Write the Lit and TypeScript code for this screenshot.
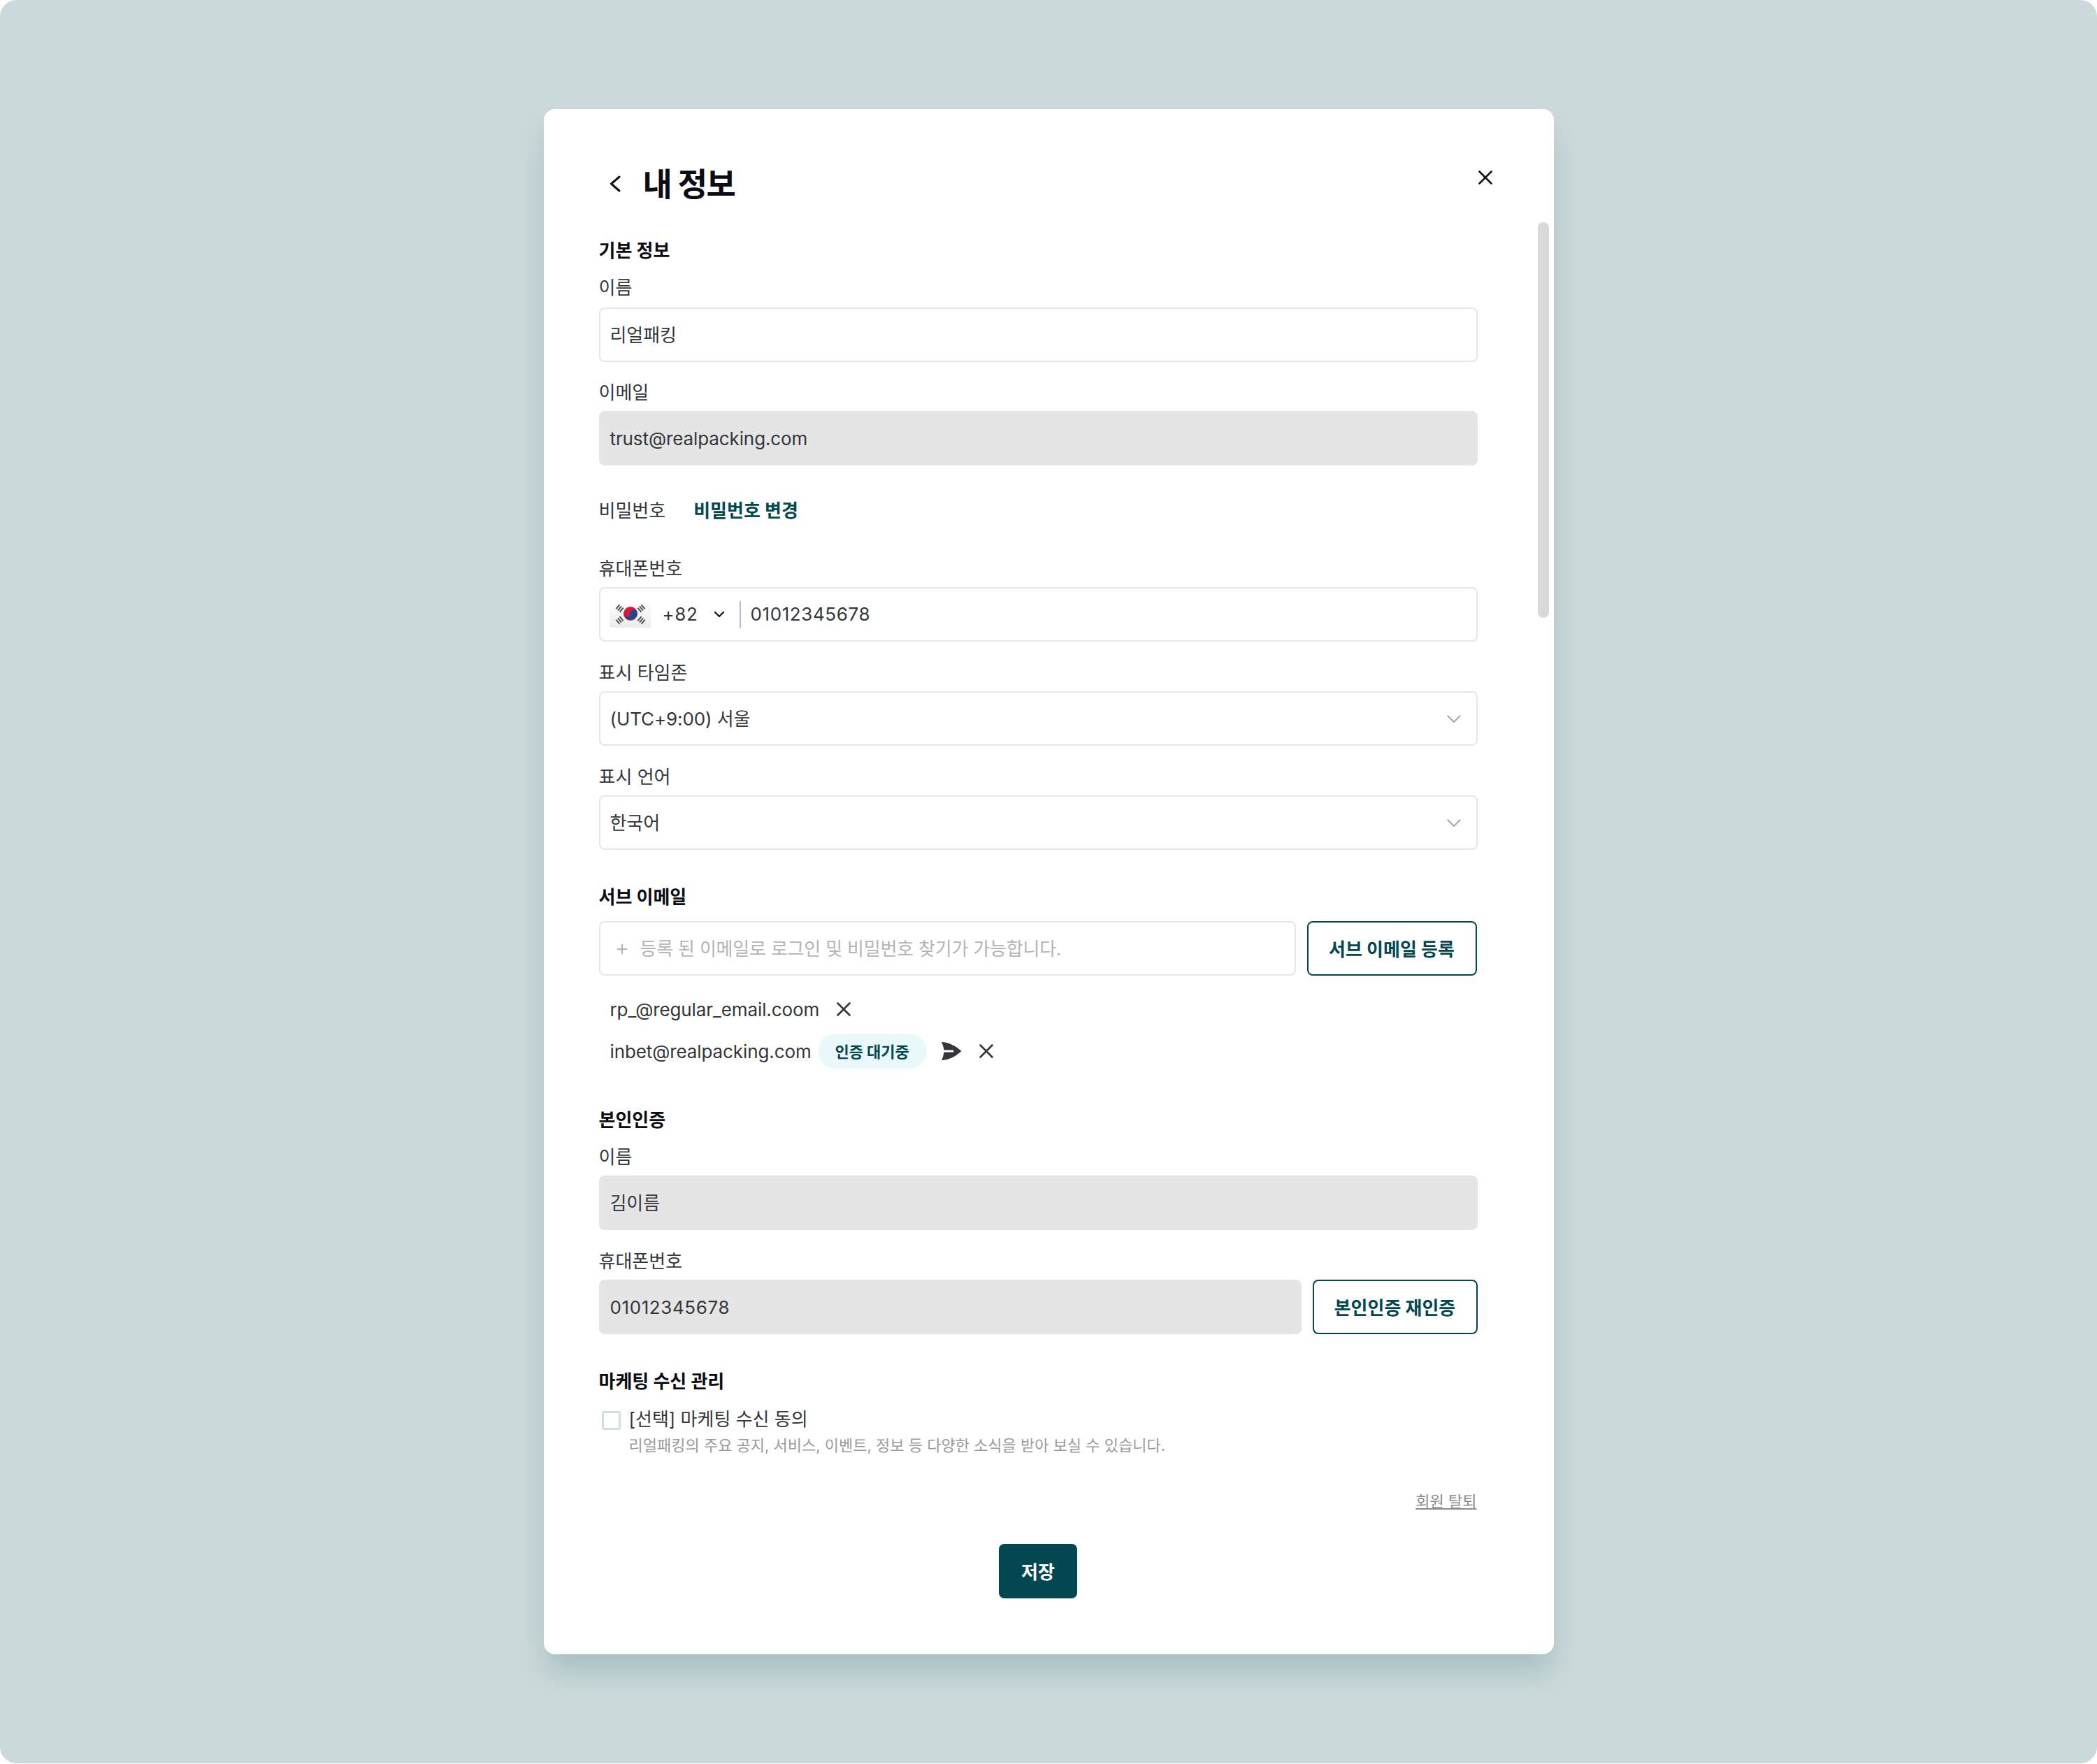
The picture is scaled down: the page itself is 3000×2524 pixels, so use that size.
import { LitElement, html, css, svg } from "lit";
import { customElement } from "lit/decorators.js";

const xIcon = (size: number, cls = "") => html`<svg class=${cls} width=${size} height=${size} viewBox="0 0 20 20" fill="none" stroke="currentColor" stroke-width="2.6" stroke-linecap="round"><path d="M1.5 1.5 18.5 18.5M18.5 1.5 1.5 18.5"/></svg>`;

const chevron = html`<svg class="sel-chev" width="20" height="12" viewBox="0 0 20 12" fill="none" stroke="#a6a8aa" stroke-width="2.2" stroke-linecap="round" stroke-linejoin="round"><path d="M1.5 1.5 10 10 18.5 1.5"/></svg>`;

const tri = (x: number, y: number, a: number) => svg`<g transform="translate(${x} ${y}) rotate(${a})"><path d="M-4 -3.4H4M-4 0H4M-4 3.4H4"/></g>`;

const flag = html`<svg class="flag" width="59" height="38" viewBox="0 0 59 38">
  <defs><linearGradient id="fl" x1="0" y1="0" x2="0" y2="1"><stop offset="0" stop-color="#ffffff"/><stop offset="1" stop-color="#ececec"/></linearGradient></defs>
  <rect width="59" height="38" fill="url(#fl)"/>
  <circle cx="30" cy="18" r="10" fill="#d8193f"/>
  <path d="M20 17a5 5 0 0 0 10 1 5 5 0 0 1 10-1A10 10 0 0 1 20 17Z" fill="#1b4a94"/>
  <g stroke="#555" stroke-width="2" fill="none">
    ${tri(14.5, 10.5, -50)}${tri(45.5, 10.5, 50)}${tri(14.5, 27.5, 50)}${tri(45.5, 27.5, -50)}
  </g>
</svg>`;

@customElement("app-root")
export class AppRoot extends LitElement {
  static styles = css`
    :host { display: block; height: 2524px; background: #fff; font-family: Inter, "Noto Sans CJK KR", sans-serif; color: #33363b; font-size: 26px; letter-spacing: -0.1px; }
    * { box-sizing: border-box; }
    .page { height: 2523px; background: #cbd9da; border-radius: 24px; padding-top: 156px; display: flex; justify-content: center; align-items: flex-start; }
    .modal { position: relative; width: 1445px; height: 2211px; background: #fff; border-radius: 16px; padding: 0 109px 0 79px; box-shadow: 0 28px 40px -4px rgba(0, 70, 85, 0.18); }
    .scroll { position: absolute; left: 1422px; top: 162px; width: 16px; height: 566px; border-radius: 8px; background: #d8d9db; }
    .close { position: absolute; left: 1337px; top: 88px; color: #111; display: block; }
    .head { height: 178px; padding-top: 87px; display: flex; align-items: flex-start; gap: 32px; }
    .back { margin-left: 15px; margin-top: 8px; }
    h1 { margin: 0; font-size: 46px; line-height: 41px; font-weight: 700; color: #0b0d12; letter-spacing: -1.5px; }
    h2 { margin: 0; font-size: 26px; line-height: 50px; font-weight: 700; color: #0b0d12; letter-spacing: 0; }
    label { display: block; padding: 2px 0 1px; line-height: 51px; font-size: 26px; letter-spacing: 0; }
    label.first { margin-bottom: 2px; }
    .in { height: 78px; border: 2px solid #e6e6e6; border-radius: 8px; display: flex; align-items: center; padding: 2px 14px 0; line-height: 40px; }
    .in.dis { background: #e5e5e5; border-color: #e5e5e5; }
    .in.sel { justify-content: space-between; padding-right: 22px; }
    .gap { height: 17px; }
    .gap.short { height: 16px; }
    .pw { display: flex; align-items: center; height: 60px; margin-top: 32px; margin-bottom: 28px; gap: 40px; letter-spacing: 0; }
    .pw a { font-weight: 700; color: #034851; }
    .cc { display: flex; align-items: center; width: 100%; margin-top: -2px; }
    .flag { margin-left: -1px; margin-right: 17px; }
    .cc-chev { margin-left: 23px; margin-right: 21px; }
    .div { width: 2px; height: 39px; background: #bcbcbc; margin-right: 13px; }
    .digits { letter-spacing: 0.6px; }
    .row { display: flex; gap: 16px; }
    .row .in { flex: 1; min-width: 0; }
    .row.r1 { margin: 9px 1px 0 0; }
    .btn { height: 78px; border: 2px solid #034851; border-radius: 8px; color: #034851; background: #fff; font: inherit; font-weight: 700; display: flex; align-items: center; justify-content: center; padding: 0 0 2px; letter-spacing: 0; }
    .btn.b1 { width: 243px; }
    .btn.b2 { width: 236px; }
    .ph { color: #b4b4b4; gap: 18px; padding-left: 23px; letter-spacing: -0.2px; }
    .list { margin-top: 18px; }
    .sub { height: 60px; display: flex; align-items: center; padding-left: 16px; }
    .x1 { margin-left: 25px; display: flex; }
    .x2 { margin-left: 25px; display: flex; }
    .send { margin-left: 20px; }
    .chip { background: #ebf8fb; color: #034851; font-size: 22px; font-weight: 700; height: 50px; width: 156px; padding: 0 0 2px; justify-content: center; border-radius: 25px; display: flex; align-items: center; margin-left: 9px; letter-spacing: 0; }
    .s-sub { height: 43px; }
    .s-auth { height: 44px; }
    .s-mkt { height: 43px; }
    .check { display: flex; gap: 12px; margin-top: 7px; padding-left: 4px; letter-spacing: 0; }
    .box { width: 27px; height: 27px; border: 3px solid #cfe0e3; border-radius: 3px; margin-top: 10px; flex: none; }
    .check-t { line-height: 44px; }
    .check-s { font-size: 22px; line-height: 30px; color: #9a9a9a; }
    .withdraw { display: block; margin-left: auto; margin-right: 1px; width: max-content; font-size: 22px; color: #8c8c8c; text-decoration: underline; margin-top: 47px; line-height: 36px; letter-spacing: 0; }
    .save { display: block; width: 112px; height: 78px; margin: 43px auto 0; background: #034851; color: #fff; border: 0; border-radius: 8px; font: inherit; font-weight: 700; padding: 0 0 2px; letter-spacing: 0; }
  `;

  render() {
    return html`
      <div class="page">
        <div class="modal">
          <div class="scroll"></div>
          ${xIcon(20, "close")}
          <div class="head">
            <svg class="back" width="16" height="24" viewBox="0 0 16 24" fill="none" stroke="#111" stroke-width="3" stroke-linecap="round" stroke-linejoin="round"><path d="M14 2 2.5 12 14 22"/></svg>
            <h1>내 정보</h1>
          </div>
          <h2>기본 정보</h2>
          <label class="first">이름</label>
          <div class="in">리얼패킹</div>
          <div class="gap short"></div>
          <label>이메일</label>
          <div class="in dis">trust@realpacking.com</div>
          <div class="pw"><span>비밀번호</span><a>비밀번호 변경</a></div>
          <label>휴대폰번호</label>
          <div class="in">
            <div class="cc">
              ${flag}
              <span class="digits">+82</span>
              <svg class="cc-chev" width="16" height="10" viewBox="0 0 16 10" fill="none" stroke="#111" stroke-width="2.2" stroke-linecap="round" stroke-linejoin="round"><path d="M2 2 8 8 14 2"/></svg>
              <div class="div"></div>
              <span class="digits">01012345678</span>
            </div>
          </div>
          <div class="gap"></div>
          <label>표시 타임존</label>
          <div class="in sel"><span>(UTC+9:00) 서울</span>${chevron}</div>
          <div class="gap"></div>
          <label>표시 언어</label>
          <div class="in sel"><span>한국어</span>${chevron}</div>
          <div class="s-sub"></div>
          <h2>서브 이메일</h2>
          <div class="row r1">
            <div class="in ph">
              <svg width="16" height="16" viewBox="0 0 16 16" stroke="#b4b4b4" stroke-width="2"><path d="M8 1v14M1 8h14"/></svg>
              <span>등록 된 이메일로 로그인 및 비밀번호 찾기가 가능합니다.</span>
            </div>
            <button class="btn b1">서브 이메일 등록</button>
          </div>
          <div class="list">
            <div class="sub"><span>rp_@regular_email.coom</span><span class="x1">${xIcon(20)}</span></div>
            <div class="sub">
              <span>inbet@realpacking.com</span>
              <span class="chip">인증 대기중</span>
              <svg class="send" width="30" height="28" viewBox="0 0 30 28"><path d="M1 1C11 1 22 7 29.500 14 22 21 11 27 1 27 3 23 4 19 4.500 15.500H17a1.500 1.500 0 0 0 0-3H4.500C4 9 3 5 1 1Z" fill="#33363b"/></svg>
              <span class="x2">${xIcon(20)}</span>
            </div>
          </div>
          <div class="s-auth"></div>
          <h2>본인인증</h2>
          <label>이름</label>
          <div class="in dis">김이름</div>
          <div class="gap"></div>
          <label>휴대폰번호</label>
          <div class="row">
            <div class="in dis"><span class="digits">01012345678</span></div>
            <button class="btn b2">본인인증 재인증</button>
          </div>
          <div class="s-mkt"></div>
          <h2>마케팅 수신 관리</h2>
          <div class="check">
            <div class="box"></div>
            <div>
              <div class="check-t">[선택] 마케팅 수신 동의</div>
              <div class="check-s">리얼패킹의 주요 공지, 서비스, 이벤트, 정보 등 다양한 소식을 받아 보실 수 있습니다.</div>
            </div>
          </div>
          <a class="withdraw">회원 탈퇴</a>
          <button class="save">저장</button>
        </div>
      </div>
    `;
  }
}
